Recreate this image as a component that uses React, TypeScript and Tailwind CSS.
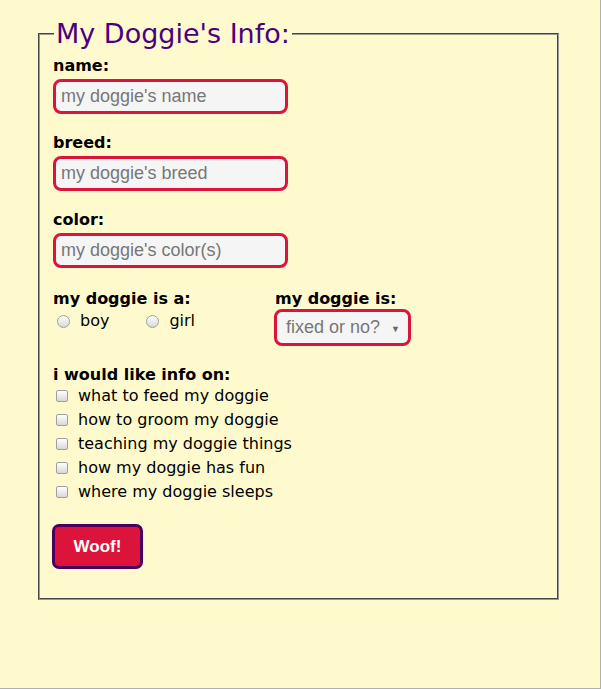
import React from 'react';

const verdana = "font-['DejaVu_Sans',Verdana,sans-serif]";
const arial = "font-['Liberation_Sans',Arial,sans-serif]";

const topics = [
  'what to feed my doggie',
  'how to groom my doggie',
  'teaching my doggie things',
  'how my doggie has fun',
  'where my doggie sleeps',
];

function TextField({ label, placeholder }: { label: string; placeholder: string }) {
  return (
    <div className="flex flex-col mb-[19px]">
      <label className={`${verdana} font-bold text-[16px] leading-[19px] text-black`}>{label}</label>
      <input
        type="text"
        placeholder={placeholder}
        className={`${arial} mt-[4px] w-[235px] h-[35px] px-[5px] text-[18px] bg-[#f5f5f5] border-[3px] border-[#dc143c] rounded-[8px] placeholder-[#777] outline-none`}
      />
    </div>
  );
}

function Radio({ label }: { label: string }) {
  return (
    <label className="flex items-center gap-[10px]">
      <span className="w-[13px] h-[13px] rounded-full border border-[#a0a0a0] bg-gradient-to-b from-white to-[#d8d8d8]" />
      <span className={`${verdana} text-[16px] text-black`}>{label}</span>
    </label>
  );
}

export default function App() {
  return (
    <div className="w-[601px] h-[689px] bg-[#fffacd] border-r border-b border-[#b0b0b0] overflow-hidden">
      <fieldset className="ml-[38px] mt-[18px] w-[521px] h-[582px] border-2 [border-style:groove] border-[#999] px-[13px] pt-[6px]">
        <legend className={`${verdana} px-[2px] ml-[1px] text-[27px] leading-[32px] text-[#4b0082]`}>
          My Doggie's Info:
        </legend>

        <div className="flex flex-col">
          <TextField label="name:" placeholder="my doggie's name" />
          <TextField label="breed:" placeholder="my doggie's breed" />
          <TextField label="color:" placeholder="my doggie's color(s)" />

          <div className="flex mt-[2px]">
            <div className="w-[222px] flex flex-col">
              <span className={`${verdana} font-bold text-[16px] leading-[19px] text-black`}>my doggie is a:</span>
              <div className="flex items-center gap-[37px] ml-[4px] mt-[1px]">
                <Radio label="boy" />
                <Radio label="girl" />
              </div>
            </div>
            <div className="flex flex-col">
              <span className={`${verdana} font-bold text-[16px] leading-[19px] text-black`}>my doggie is:</span>
              <div className="relative mt-[1px] -ml-[1px] w-[137px] h-[37px] bg-[#f5f5f5] border-[3px] border-[#dc143c] rounded-[8px] flex items-center pl-[9px]">
                <span className={`${arial} text-[18px] text-[#777]`}>fixed or no?</span>
                <span className="absolute right-[8px] top-[10px] text-[9px] text-[#666]">▼</span>
              </div>
            </div>
          </div>

          <div className="flex flex-col mt-[19px]">
            <span className={`${verdana} font-bold text-[16px] leading-[19px] text-black`}>i would like info on:</span>
            <div className="flex flex-col">
              {topics.map((t) => (
                <label key={t} className="flex items-center gap-[10px] h-[24px] ml-[3px]">
                  <span className="w-[12px] h-[12px] rounded-[2px] border border-[#a0a0a0] bg-gradient-to-b from-white to-[#d8d8d8]" />
                  <span className={`${verdana} text-[16px] text-black`}>{t}</span>
                </label>
              ))}
            </div>
          </div>

          <button
            className={`${arial} mt-[20px] -ml-[1px] w-[91px] h-[45px] bg-[#dc143c] border-[3px] border-[#4b0060] rounded-[7px] text-white font-bold text-[17px]`}
          >
            Woof!
          </button>
        </div>
      </fieldset>
    </div>
  );
}
